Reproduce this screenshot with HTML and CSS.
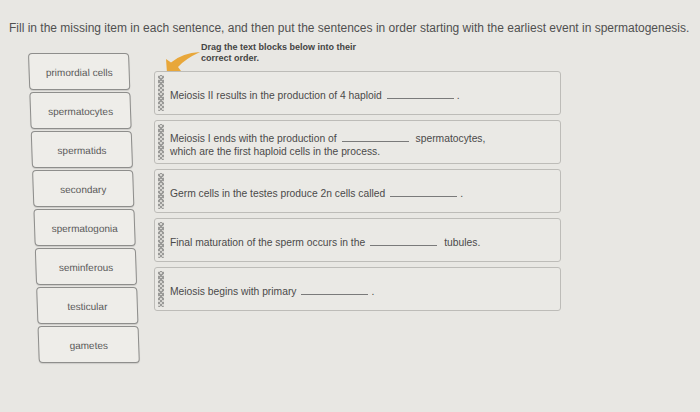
FILE: index.html
```html
<!DOCTYPE html>
<html>
<head>
<meta charset="utf-8">
<link rel="stylesheet" href="styles.css">
</head>
<body>
<p class="title">Fill in the missing item in each sentence, and then put the sentences in order starting with the earliest event in spermatogenesis.</p>
<div class="content">
  <div class="bank">
    <div class="chip">primordial cells</div>
    <div class="chip">spermatocytes</div>
    <div class="chip">spermatids</div>
    <div class="chip">secondary</div>
    <div class="chip">spermatogonia</div>
    <div class="chip">seminferous</div>
    <div class="chip">testicular</div>
    <div class="chip">gametes</div>
  </div>
  <div class="order">
    <div class="header">
      <svg class="arrow" width="38" height="26" viewBox="0 0 38 26">
        <path d="M4 23 L3 9 L8 12.5 Q19 3 37 2 Q22 9 15 17 L18 21 Z" fill="#e8a73a"/>
      </svg>
      <div class="hint">Drag the text blocks below into their<br>correct order.</div>
    </div>
    <div class="list">
      <div class="item"><span class="handle"></span><div class="text"><div class="line">Meiosis II results in the production of 4 haploid<span class="blank"></span><span class="after">.</span></div></div></div>
      <div class="item"><span class="handle"></span><div class="text"><div class="line">Meiosis I ends with the production of<span class="blank"></span><span class="after wide">spermatocytes,</span></div><div class="line">which are the first haploid cells in the process.</div></div></div>
      <div class="item"><span class="handle"></span><div class="text"><div class="line">Germ cells in the testes produce 2n cells called<span class="blank"></span><span class="after">.</span></div></div></div>
      <div class="item"><span class="handle"></span><div class="text"><div class="line">Final maturation of the sperm occurs in the<span class="blank"></span><span class="after wide">tubules.</span></div></div></div>
      <div class="item"><span class="handle"></span><div class="text"><div class="line">Meiosis begins with primary<span class="blank"></span><span class="after">.</span></div></div></div>
    </div>
  </div>
</div>
</body>
</html>
```
FILE: styles.css
```css
html, body {
  margin: 0;
  padding: 0;
}
body {
  width: 700px;
  height: 412px;
  overflow: hidden;
  background: #e8e7e3;
  font-family: "Liberation Sans", Arial, sans-serif;
  color: #4e4e4e;
}
.title {
  margin: 21px 0 0 9px;
  font-size: 12px;
  line-height: 14px;
  color: #505050;
  white-space: nowrap;
}
.content {
  display: flex;
  gap: 25px;
  padding-left: 28px;
  margin-top: 6px;
}
.bank {
  width: 101px;
  margin-top: 12px;
  display: flex;
  flex-direction: column;
  gap: 2px;
  transform: skewX(2deg);
  transform-origin: 0 0;
}
.chip {
  box-sizing: border-box;
  height: 37px;
  border: 1.5px solid #8e8e8c;
  border-radius: 4px;
  background: #eeede9;
  box-shadow: 0 1px 1px rgba(0,0,0,0.12);
  display: flex;
  align-items: center;
  justify-content: center;
  font-size: 10px;
  color: #5a5a5a;
  padding-top: 1px;
}
.order {
  width: 407px;
}
.header {
  height: 30px;
  display: flex;
  align-items: flex-start;
}
.arrow {
  margin: 9px 0 0 9px;
  flex: none;
  overflow: visible;
}
.hint {
  font-size: 9px;
  line-height: 11px;
  font-weight: bold;
  color: #444;
  padding-top: 1px;
}
.list {
  display: flex;
  flex-direction: column;
  gap: 5px;
}
.item {
  box-sizing: border-box;
  height: 44px;
  border: 1px solid #bdbcb8;
  border-radius: 3px;
  background: #eae9e5;
  display: flex;
  align-items: center;
  padding: 3px 0 3px 3px;
}
.handle {
  align-self: stretch;
  width: 6px;
  flex: none;
  background:
    repeating-linear-gradient(45deg, #9a9a98 0 1px, transparent 1px 3px),
    repeating-linear-gradient(-45deg, #9a9a98 0 1px, transparent 1px 3px),
    #d6d5d1;
  border-radius: 1px;
}
.text {
  margin-left: 6px;
  padding-top: 5px;
  font-size: 10.3px;
  line-height: 13px;
  color: #4a4a4a;
}
.line {
  display: flex;
  align-items: baseline;
  white-space: nowrap;
}
.blank {
  display: inline-block;
  width: 67px;
  height: 1px;
  margin-left: 5px;
  border-bottom: 1px solid #7a7a7a;
}
.after {
  margin-left: 3px;
}
.after.wide {
  margin-left: 7px;
}
```
